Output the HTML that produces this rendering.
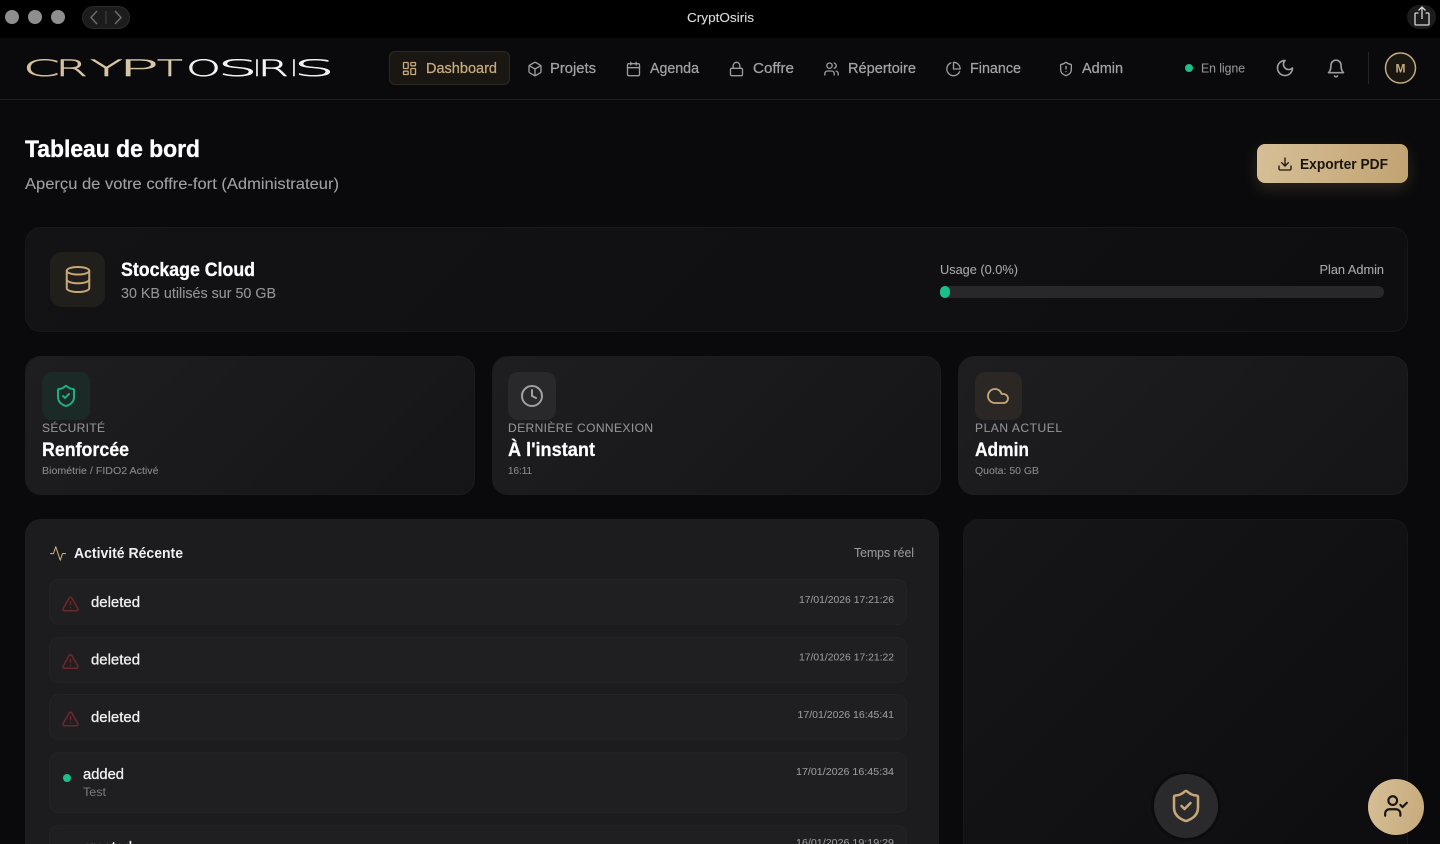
<!DOCTYPE html>
<html lang="fr"><head><meta charset="utf-8"><title>CryptOsiris</title>
<style>
html,body{margin:0;padding:0;width:1440px;height:844px;overflow:hidden;background:#0a0a0c;font-family:"Liberation Sans",sans-serif}
#p{position:absolute;left:0;top:0;width:1440px;height:844px;overflow:hidden;background:#0a0a0c}
.b{position:absolute;box-sizing:border-box}
.card{border-radius:16px;border:1px solid #18181a}
.stat{top:356px;height:139px;background:linear-gradient(135deg,#1e1e20,#151517);border:1px solid #1c1c1e}
.row{left:49px;width:858px;background:#1f1f21;border:1px solid #232325;border-radius:10px}
svg#o{position:absolute;left:0;top:0}
text{font-family:"Liberation Sans",sans-serif;white-space:pre}
.n{font-size:14.5px;fill:#a2a2a6;stroke:#a2a2a6;stroke-width:.25}
.t{font-size:10.5px;fill:#96969a;stroke:#96969a;stroke-width:.1}
.l{font-size:12px;fill:#929296;stroke:#929296;stroke-width:.1}
.v{font-size:19px;font-weight:bold;fill:#fff;stroke:#fff;stroke-width:.25}
.s{font-size:10.5px;fill:#88888c;stroke:#88888c;stroke-width:.1}
.d{font-size:14.5px;fill:#f0f0f0;stroke:#f0f0f0;stroke-width:.3}
.lg text{font-family:"DejaVu Sans",sans-serif;font-weight:200;font-size:22px;stroke:url(#lg);stroke-width:.45;fill:url(#lg)}
.i{fill:none;stroke-width:2;stroke-linecap:round;stroke-linejoin:round}
</style></head><body>
<div id="p">
<div class="b" style="left:0;top:0;width:1440px;height:38px;background:#000"></div>
<div class="b" style="left:0;top:99px;width:1440px;height:1px;background:#1f1f22"></div>
<div class="b" style="left:82px;top:6px;width:48px;height:23px;border-radius:12px;background:#1c1c1d;border:1px solid #2a2a2b"></div>
<div class="b" style="left:1407px;top:5px;width:29px;height:24px;border-radius:12px;background:#1c1c1d"></div>
<div class="b" style="left:389px;top:51px;width:121px;height:34px;border-radius:6px;background:#1a1712;border:1px solid #2c2922"></div>
<div class="b" style="left:1257px;top:144px;width:151px;height:39px;border-radius:8px;background:linear-gradient(100deg,#d6bf97,#c1a372);box-shadow:0 6px 16px rgba(201,173,125,.18)"></div>
<div class="b card" style="left:25px;top:227px;width:1383px;height:105px;background:linear-gradient(135deg,#131315,#0e0e10)"></div>
<div class="b" style="left:50px;top:252px;width:55px;height:55px;border-radius:12px;background:#211f1c"></div>
<div class="b" style="left:940px;top:285.5px;width:444px;height:12px;border-radius:6px;background:#28282b"></div>
<div class="b" style="left:940px;top:285.5px;width:10px;height:12px;border-radius:6px;background:#1bc088"></div>
<div class="b card stat" style="left:25px;width:450px"></div>
<div class="b card stat" style="left:492px;width:449px"></div>
<div class="b card stat" style="left:958px;width:450px"></div>
<div class="b" style="left:42px;top:372px;width:48px;height:48px;border-radius:10px;background:#1b2a27"></div>
<div class="b" style="left:508px;top:372px;width:48px;height:48px;border-radius:10px;background:#29292c"></div>
<div class="b" style="left:975px;top:372px;width:47px;height:48px;border-radius:10px;background:#2a2724"></div>
<div class="b card" style="left:25px;top:519px;width:914px;height:345px;background:#1c1c1e;border-color:#1e1e20"></div>
<div class="b card" style="left:963px;top:519px;width:445px;height:345px;background:linear-gradient(135deg,#161618,#0d0d0f);border-color:#18181a"></div>
<div class="b row" style="top:579px;height:46px"></div>
<div class="b row" style="top:637px;height:46px"></div>
<div class="b row" style="top:694px;height:46px"></div>
<div class="b row" style="top:752px;height:61px"></div>
<div class="b row" style="top:825px;height:60px"></div>
<div class="b" style="left:1154px;top:774px;width:64px;height:64px;border-radius:50%;background:#2a2a2d;box-shadow:0 0 0 3px #0c0c0e"></div>
<div class="b" style="left:1368px;top:779px;width:56px;height:56px;border-radius:50%;background:linear-gradient(100deg,#d6bf97,#c6aa7b)"></div>

<svg id="o" width="1440" height="844" viewBox="0 0 1440 844" xmlns="http://www.w3.org/2000/svg">
<defs>
<linearGradient id="lg" gradientUnits="userSpaceOnUse" x1="26" y1="0" x2="330" y2="0"><stop offset="0" stop-color="#d4c09c"/><stop offset=".48" stop-color="#d8c8aa"/><stop offset=".56" stop-color="#f4f4f4"/><stop offset="1" stop-color="#f4f4f4"/></linearGradient>
<symbol id="dash" viewBox="0 0 24 24"><rect width="7" height="9" x="3" y="3" rx="1"/><rect width="7" height="5" x="14" y="3" rx="1"/><rect width="7" height="9" x="14" y="12" rx="1"/><rect width="7" height="5" x="3" y="16" rx="1"/></symbol>
<symbol id="box" viewBox="0 0 24 24"><path d="M21 8a2 2 0 0 0-1-1.73l-7-4a2 2 0 0 0-2 0l-7 4A2 2 0 0 0 3 8v8a2 2 0 0 0 1 1.73l7 4a2 2 0 0 0 2 0l7-4A2 2 0 0 0 21 16Z"/><path d="m3.3 7 8.7 5 8.7-5"/><path d="M12 22V12"/></symbol>
<symbol id="cal" viewBox="0 0 24 24"><path d="M8 2v4"/><path d="M16 2v4"/><rect width="18" height="18" x="3" y="4" rx="2"/><path d="M3 10h18"/></symbol>
<symbol id="lock" viewBox="0 0 24 24"><rect width="18" height="11" x="3" y="11" rx="2"/><path d="M7 11V7a5 5 0 0 1 10 0v4"/></symbol>
<symbol id="users" viewBox="0 0 24 24"><path d="M16 21v-2a4 4 0 0 0-4-4H6a4 4 0 0 0-4 4v2"/><circle cx="9" cy="7" r="4"/><path d="M22 21v-2a4 4 0 0 0-3-3.87"/><path d="M16 3.13a4 4 0 0 1 0 7.75"/></symbol>
<symbol id="pie" viewBox="0 0 24 24"><path d="M21.21 15.89A10 10 0 1 1 8 2.83"/><path d="M22 12A10 10 0 0 0 12 2v10z"/></symbol>
<symbol id="sha" viewBox="0 0 24 24"><path d="M20 13c0 5-3.5 7.5-7.66 8.95a1 1 0 0 1-.67-.01C7.5 20.5 4 18 4 13V6a1 1 0 0 1 1-1c2 0 4.5-1.2 6.24-2.72a1.17 1.17 0 0 1 1.52 0C14.51 3.81 17 5 19 5a1 1 0 0 1 1 1z"/><path d="M12 8v4"/><path d="M12 16h.01"/></symbol>
<symbol id="shc" viewBox="0 0 24 24"><path d="M20 13c0 5-3.5 7.5-7.66 8.95a1 1 0 0 1-.67-.01C7.5 20.5 4 18 4 13V6a1 1 0 0 1 1-1c2 0 4.5-1.2 6.24-2.72a1.17 1.17 0 0 1 1.52 0C14.51 3.81 17 5 19 5a1 1 0 0 1 1 1z"/><path d="m9 12 2 2 4-4"/></symbol>
<symbol id="moon" viewBox="0 0 24 24"><path d="M12 3a6 6 0 0 0 9 9 9 9 0 1 1-9-9Z"/></symbol>
<symbol id="bell" viewBox="0 0 24 24"><path d="M6 8a6 6 0 0 1 12 0c0 7 3 9 3 9H3s3-2 3-9"/><path d="M10.3 21a1.94 1.94 0 0 0 3.4 0"/></symbol>
<symbol id="dl" viewBox="0 0 24 24"><path d="M21 15v4a2 2 0 0 1-2 2H5a2 2 0 0 1-2-2v-4"/><path d="m7 10 5 5 5-5"/><path d="M12 15V3"/></symbol>
<symbol id="db" viewBox="0 0 24 24"><ellipse cx="12" cy="5" rx="9" ry="3"/><path d="M3 5V19A9 3 0 0 0 21 19V5"/><path d="M3 12A9 3 0 0 0 21 12"/></symbol>
<symbol id="clock" viewBox="0 0 24 24"><circle cx="12" cy="12" r="10"/><path d="M12 6v6l4 2"/></symbol>
<symbol id="cloud" viewBox="0 0 24 24"><path d="M17.5 19H9a7 7 0 1 1 6.71-9h1.79a4.5 4.5 0 1 1 0 9Z"/></symbol>
<symbol id="act" viewBox="0 0 24 24"><path d="M22 12h-4l-3 9L9 3l-3 9H2"/></symbol>
<symbol id="tri" viewBox="0 0 24 24"><path d="m21.73 18-8-14a2 2 0 0 0-3.48 0l-8 14A2 2 0 0 0 4 21h16a2 2 0 0 0 1.73-3"/><path d="M12 9v4"/><path d="M12 17h.01"/></symbol>
<symbol id="uc" viewBox="0 0 24 24"><path d="M16 21v-2a4 4 0 0 0-4-4H6a4 4 0 0 0-4 4v2"/><circle cx="9" cy="7" r="4"/><path d="m16 11 2 2 4-4"/></symbol>
</defs>

<!-- title bar -->
<circle cx="12" cy="17" r="7" fill="#8e8e8e"/><circle cx="35" cy="17" r="7" fill="#8e8e8e"/><circle cx="58" cy="17" r="7" fill="#8e8e8e"/>
<path d="M97 11l-6 6.5 6 6.5M115 11l6 6.500-6 6.500" fill="none" stroke="#6f6f70" stroke-width="1.400"/>
<path d="M106 11v13" stroke="#444" stroke-width="1"/>
<text x="687" y="22" font-size="12.500" fill="#dcdcdc" stroke="#dcdcdc" stroke-width=".1" textLength="67" lengthAdjust="spacingAndGlyphs">CryptOsiris</text>
<g fill="none" stroke="#d8d8d8" stroke-width="1.300"><path d="M1418.500 13h-2.500a1 1 0 0 0-1 1v10a1 1 0 0 0 1 1h12a1 1 0 0 0 1-1V14a1 1 0 0 0-1-1h-2.500"/><path d="M1422 19V7.500M1418.500 10.500l3.500-3.500 3.500 3.500"/></g>

<!-- logo -->
<g class="lg">
<text x="23" y="76" textLength="36.800" lengthAdjust="spacingAndGlyphs">C</text>
<text x="55.400" y="76" textLength="32.400" lengthAdjust="spacingAndGlyphs">R</text>
<text x="90" y="76" textLength="32.800" lengthAdjust="spacingAndGlyphs">Y</text>
<text x="118.300" y="76" textLength="40.900" lengthAdjust="spacingAndGlyphs">P</text>
<text x="157" y="76" textLength="25.700" lengthAdjust="spacingAndGlyphs">T</text>
<text x="186" y="76" textLength="35" lengthAdjust="spacingAndGlyphs">O</text>
<text x="217.900" y="76" textLength="39.600" lengthAdjust="spacingAndGlyphs">S</text>
<text x="253.800" y="76" textLength="6.500" lengthAdjust="spacingAndGlyphs">I</text>
<text x="257.600" y="76" textLength="31.300" lengthAdjust="spacingAndGlyphs">R</text>
<text x="290.800" y="76" textLength="6.500" lengthAdjust="spacingAndGlyphs">I</text>
<text x="293.750" y="76" textLength="40.900" lengthAdjust="spacingAndGlyphs">S</text>
</g>

<!-- nav -->
<use href="#dash" x="401.500" y="60.500" width="16" height="16" class="i" stroke="#c4a97c"/>
<text x="426" y="73" class="n" style="fill:#c6ab7e;stroke:#c6ab7e" textLength="71" lengthAdjust="spacingAndGlyphs">Dashboard</text>
<g class="i" stroke="#9c9ca0">
<use href="#box" x="527" y="61" width="16" height="16"/>
<use href="#cal" x="625.500" y="61" width="16" height="16"/>
<use href="#lock" x="728.500" y="61" width="16" height="16"/>
<use href="#users" x="823.500" y="61" width="16" height="16"/>
<use href="#pie" x="945.500" y="61" width="16" height="16"/>
<use href="#sha" x="1058" y="61" width="16" height="16"/>
<use href="#moon" x="1275" y="58" width="20" height="20"/>
<use href="#bell" x="1326" y="58.500" width="20" height="20"/>
</g>
<text x="550" y="73" class="n" textLength="46" lengthAdjust="spacingAndGlyphs">Projets</text>
<text x="650" y="73" class="n" textLength="49" lengthAdjust="spacingAndGlyphs">Agenda</text>
<text x="753" y="73" class="n" textLength="41" lengthAdjust="spacingAndGlyphs">Coffre</text>
<text x="848" y="73" class="n" textLength="68" lengthAdjust="spacingAndGlyphs">Répertoire</text>
<text x="970" y="73" class="n" textLength="51" lengthAdjust="spacingAndGlyphs">Finance</text>
<text x="1082" y="73" class="n" textLength="41" lengthAdjust="spacingAndGlyphs">Admin</text>
<circle cx="1189" cy="68" r="4" fill="#1bc088"/>
<text x="1201" y="72.500" font-size="12.500" fill="#929296" stroke="#929296" stroke-width=".1" textLength="44" lengthAdjust="spacingAndGlyphs">En ligne</text>
<path d="M1368.500 52v32" stroke="#242427"/>
<circle cx="1400.500" cy="68" r="15" fill="#1a1712" stroke="#c6ab7e" stroke-width="1.500"/>
<text x="1395.500" y="72.500" font-size="12" font-weight="bold" fill="#c6ab7e" textLength="10" lengthAdjust="spacingAndGlyphs">M</text>

<!-- heading -->
<text x="25" y="157" font-size="24" font-weight="bold" fill="#fff" stroke="#fff" stroke-width=".35" textLength="175" lengthAdjust="spacingAndGlyphs">Tableau de bord</text>
<text x="25" y="189" font-size="16" fill="#a0a0a4" stroke="#a0a0a4" stroke-width=".1" textLength="314" lengthAdjust="spacingAndGlyphs">Aperçu de votre coffre-fort (Administrateur)</text>
<use href="#dl" x="1277" y="156" width="16" height="16" class="i" stroke="#1a1510"/>
<text x="1300" y="169" font-size="14.500" font-weight="bold" fill="#1a1510" textLength="88" lengthAdjust="spacingAndGlyphs">Exporter PDF</text>

<!-- storage -->
<use href="#db" x="63" y="264.500" width="30" height="30" fill="none" stroke="#c6a878" stroke-width="1.600" stroke-linecap="round" stroke-linejoin="round"/>
<text x="121" y="276" font-size="19" font-weight="bold" fill="#fff" stroke="#fff" stroke-width=".3" textLength="134" lengthAdjust="spacingAndGlyphs">Stockage Cloud</text>
<text x="121" y="298" font-size="14.500" fill="#949498" stroke="#949498" stroke-width=".1" textLength="155" lengthAdjust="spacingAndGlyphs">30 KB utilisés sur 50 GB</text>
<text x="940" y="274" font-size="12.500" fill="#a6a6aa" stroke="#a6a6aa" stroke-width=".1" textLength="78" lengthAdjust="spacingAndGlyphs">Usage (0.0%)</text>
<text x="1319.500" y="274" font-size="12.500" fill="#a6a6aa" stroke="#a6a6aa" stroke-width=".1" textLength="64.500" lengthAdjust="spacingAndGlyphs">Plan Admin</text>

<!-- stats -->
<use href="#shc" x="54" y="384" width="24" height="24" class="i" stroke="#1fae80"/>
<use href="#clock" x="520" y="384" width="24" height="24" class="i" stroke="#a0a0a4"/>
<use href="#cloud" x="986" y="384" width="24" height="24" fill="none" stroke="#c6a878" stroke-width="1.800" stroke-linecap="round" stroke-linejoin="round"/>
<text x="42" y="432" class="l" textLength="63" lengthAdjust="spacing">SÉCURITÉ</text>
<text x="508" y="432" class="l" textLength="145" lengthAdjust="spacing">DERNIÈRE CONNEXION</text>
<text x="975" y="432" class="l" textLength="87" lengthAdjust="spacing">PLAN ACTUEL</text>
<text x="42" y="456" class="v" textLength="87" lengthAdjust="spacingAndGlyphs">Renforcée</text>
<text x="508" y="456" class="v" textLength="87" lengthAdjust="spacingAndGlyphs">À l'instant</text>
<text x="975" y="456" class="v" textLength="54" lengthAdjust="spacingAndGlyphs">Admin</text>
<text x="42" y="474" class="s" textLength="116.500" lengthAdjust="spacingAndGlyphs">Biométrie / FIDO2 Activé</text>
<text x="508" y="474" class="s" textLength="24" lengthAdjust="spacingAndGlyphs">16:11</text>
<text x="975" y="474" class="s" textLength="64" lengthAdjust="spacingAndGlyphs">Quota: 50 GB</text>

<!-- activity -->
<use href="#act" x="49" y="544.500" width="18" height="18" fill="none" stroke="#c6a878" stroke-width="1.500" stroke-linecap="round" stroke-linejoin="round"/>
<text x="74" y="558" font-size="14.500" font-weight="bold" fill="#f0f0f0" textLength="109" lengthAdjust="spacingAndGlyphs">Activité Récente</text>
<text x="854" y="557" font-size="12.500" fill="#98989c" stroke="#98989c" stroke-width=".1" textLength="60" lengthAdjust="spacingAndGlyphs">Temps réel</text>
<g fill="none" stroke="#6e282c" stroke-width="2" stroke-linecap="round" stroke-linejoin="round">
<use href="#tri" x="61.500" y="595" width="18" height="18"/>
<use href="#tri" x="61.500" y="652.500" width="18" height="18"/>
<use href="#tri" x="61.500" y="710" width="18" height="18"/>
</g>
<text x="91" y="607" class="d" textLength="49" lengthAdjust="spacingAndGlyphs">deleted</text>
<text x="91" y="664.500" class="d" textLength="49" lengthAdjust="spacingAndGlyphs">deleted</text>
<text x="91" y="722" class="d" textLength="49" lengthAdjust="spacingAndGlyphs">deleted</text>
<circle cx="67" cy="778" r="4" fill="#1bc088"/>
<text x="83" y="779" class="d" textLength="41" lengthAdjust="spacingAndGlyphs">added</text>
<text x="83" y="796" font-size="12" fill="#7c7c80" textLength="23" lengthAdjust="spacingAndGlyphs">Test</text>
<text x="83" y="852" class="d" textLength="49" lengthAdjust="spacingAndGlyphs">created</text>
<text x="799" y="603" class="t" textLength="95" lengthAdjust="spacingAndGlyphs">17/01/2026 17:21:26</text>
<text x="799" y="660.500" class="t" textLength="95" lengthAdjust="spacingAndGlyphs">17/01/2026 17:21:22</text>
<text x="797.500" y="718" class="t" textLength="96.500" lengthAdjust="spacingAndGlyphs">17/01/2026 16:45:41</text>
<text x="796" y="775" class="t" textLength="98" lengthAdjust="spacingAndGlyphs">17/01/2026 16:45:34</text>
<text x="796" y="846" class="t" textLength="98" lengthAdjust="spacingAndGlyphs">16/01/2026 19:19:29</text>

<!-- floating -->
<use href="#shc" x="1168" y="788" width="36" height="36" fill="none" stroke="#c6a878" stroke-width="1.700" stroke-linecap="round" stroke-linejoin="round"/>
<use href="#uc" x="1383" y="793" width="26" height="26" class="i" stroke="#1a1510"/>
</svg>
</div>
</body></html>
